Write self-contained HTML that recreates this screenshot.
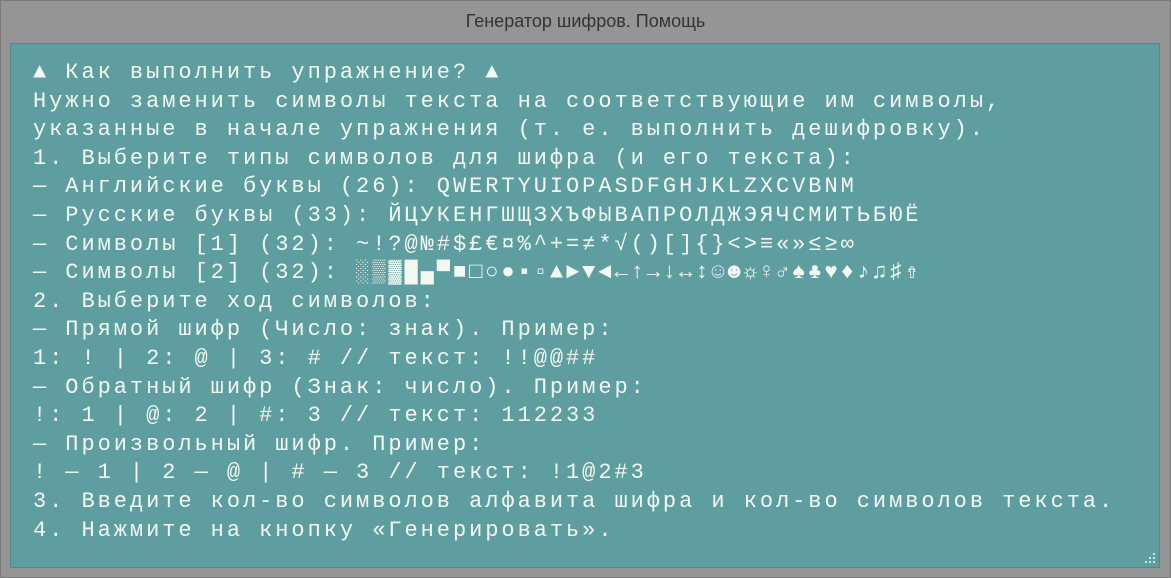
<!DOCTYPE html>
<html><head><meta charset="utf-8"><style>
html,body{margin:0;padding:0}
body{width:1171px;height:578px;background:#959595;position:relative;overflow:hidden;box-sizing:border-box;border:1px solid #7a7a7a}
.title{position:absolute;left:0;right:0;top:10px;text-align:center;font-family:"Liberation Sans","DejaVu Sans",sans-serif;font-size:18px;color:#333}
.panel{position:absolute;left:9px;top:42px;width:1150px;height:525px;background:#5f9ea0;border:1px solid #4f8a8c;box-sizing:border-box}
pre{position:absolute;left:22px;top:15px;margin:0;font-family:"Liberation Mono","DejaVu Sans Mono",monospace;font-size:22px;letter-spacing:2.95px;line-height:28.6px;color:#f2f8f2;white-space:pre}
.grip{position:absolute;right:4px;bottom:4px;width:10px;height:10px}
.grip i{position:absolute;width:2px;height:2px;background:#cfe3e3}
</style></head><body>
<div class="title">Генератор шифров. Помощь</div>
<div class="panel">
<pre>▲ Как выполнить упражнение? ▲
Нужно заменить символы текста на соответствующие им символы,
указанные в начале упражнения (т. е. выполнить дешифровку).
1. Выберите типы символов для шифра (и его текста):
— Английские буквы (26): QWERTYUIOPASDFGHJKLZXCVBNM
— Русские буквы (33): ЙЦУКЕНГШЩЗХЪФЫВАПРОЛДЖЭЯЧСМИТЬБЮЁ
— Символы [1] (32): ~!?@№#$£€¤%^+=≠*√()[]{}&lt;&gt;≡«»≤≥∞
— Символы [2] (32): ░▒▓█▄▀■□○●▪▫▲►▼◄←↑→↓↔↕☺☻☼♀♂♠♣♥♦♪♫♯⇮
2. Выберите ход символов:
— Прямой шифр (Число: знак). Пример:
1: ! | 2: @ | 3: # // текст: !!@@##
— Обратный шифр (Знак: число). Пример:
!: 1 | @: 2 | #: 3 // текст: 112233
— Произвольный шифр. Пример:
! — 1 | 2 — @ | # — 3 // текст: !1@2#3
3. Введите кол-во символов алфавита шифра и кол-во символов текста.
4. Нажмите на кнопку «Генерировать».</pre>
<div class="grip"><i style="left:8px;top:0"></i><i style="left:4px;top:4px"></i><i style="left:8px;top:4px"></i><i style="left:0;top:8px"></i><i style="left:4px;top:8px"></i><i style="left:8px;top:8px"></i></div>
</div>
</body></html>
